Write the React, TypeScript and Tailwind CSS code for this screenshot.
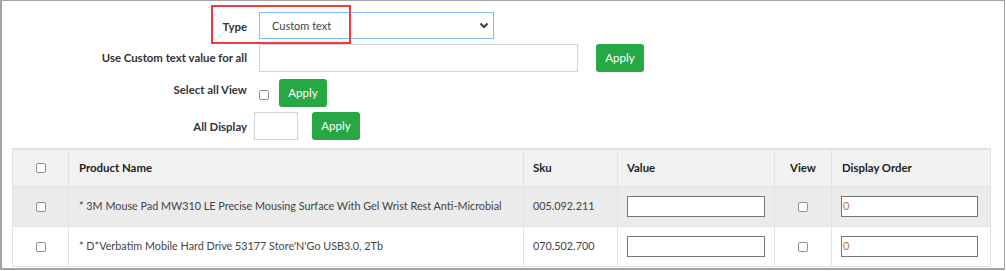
import React from "react";

const font = { fontFamily: "Lato, 'Open Sans', sans-serif" };

function Check() {
  return (
    <span className="inline-block w-[10px] h-[10px] border border-[#8f8f8f] rounded-[2px] bg-white" />
  );
}

function ApplyBtn() {
  return (
    <button className="w-[48px] h-[28px] bg-[#28a745] rounded-[3px] text-white text-[11.5px] leading-none">
      Apply
    </button>
  );
}

const rows = [
  { name: "* 3M Mouse Pad MW310 LE Precise Mousing Surface With Gel Wrist Rest Anti-Microbial", sku: "005.092.211", bg: "bg-[#ebebeb]" },
  { name: "* D*Verbatim Mobile Hard Drive 53177 Store'N'Go USB3.0, 2Tb", sku: "070.502.700", bg: "bg-white" },
];

export default function App() {
  return (
    <div style={font} className="relative w-[1005px] h-[270px] border-t border-r border-b-2 border-l-2 border-[#a3a3a3] bg-white overflow-hidden text-[#333]">
      {/* highlight */}
      <div className="absolute left-[209px] top-[4px] w-[140px] h-[39px] border-2 border-[#ee3b40] pointer-events-none" />

      <div className="flex flex-col pt-[11px]">
        {/* Type */}
        <div className="flex items-center h-[27px]">
          <div className="w-[245px] text-right font-bold text-[11.4px] pt-[2px]">Type</div>
          <div className="ml-[12px] w-[235px] h-[27px] border border-[#80bdff] flex items-center justify-between pl-[12px] pr-[4px]">
            <span className="text-[11px] text-[#444] pt-[2px]">Custom text</span>
            <svg width="10" height="7" viewBox="0 0 10 7">
              <path d="M1.5 1.5 L5 5 L8.5 1.5" fill="none" stroke="#3a3f44" strokeWidth="2" />
            </svg>
          </div>
        </div>

        {/* Use custom */}
        <div className="flex items-center h-[28px] mt-[5px]">
          <div className="w-[245px] text-right font-bold text-[11.4px]">Use Custom text value for all</div>
          <div className="ml-[12px] w-[319px] h-[28px] border border-[#cfd4da]" />
          <div className="ml-[18px]">
            <ApplyBtn />
          </div>
        </div>

        {/* Select all view */}
        <div className="flex items-center h-[28px] mt-[7px]">
          <div className="w-[245px] text-right font-bold text-[11.4px] self-start pt-[2px]">Select all View</div>
          <div className="ml-[12px] flex items-center pt-[3px]">
            <Check />
          </div>
          <div className="ml-[10px]">
            <ApplyBtn />
          </div>
        </div>

        {/* All display */}
        <div className="flex items-center h-[28px] mt-[5px]">
          <div className="w-[245px] text-right font-bold text-[11.4px] pt-[2px]">All Display</div>
          <div className="ml-[7px] w-[44px] h-[28px] border border-[#cfd4da]" />
          <div className="ml-[14px]">
            <ApplyBtn />
          </div>
        </div>
      </div>

      {/* table */}
      <div className="ml-[10px] mt-[8px] w-[979px] border-t-2 border-r border-[#e2e2e2]">
        <div className="grid grid-cols-[56px_455px_94px_157px_57px_159px] h-[37px] bg-[#f2f2f2] border-b border-[#e2e2e2] font-bold text-[11.4px] text-[#222]">
          <div className="border-l border-[#e2e2e2] flex items-center justify-center"><Check /></div>
          <div className="border-l border-[#e2e2e2] flex items-center pl-[10px]">Product Name</div>
          <div className="border-l border-[#e2e2e2] flex items-center pl-[9px]">Sku</div>
          <div className="border-l border-[#e2e2e2] flex items-center pl-[9px]">Value</div>
          <div className="border-l border-[#e2e2e2] flex items-center justify-center">View</div>
          <div className="border-l border-[#e2e2e2] flex items-center pl-[10px]">Display Order</div>
        </div>
        {rows.map((r, i) => (
          <div key={i} className={`grid grid-cols-[56px_455px_94px_157px_57px_159px] h-[40px] ${r.bg} border-b border-[#e2e2e2] text-[10.8px] text-[#444]`}>
            <div className="border-l border-[#e2e2e2] flex items-center justify-center"><Check /></div>
            <div className="border-l border-[#e2e2e2] flex items-center pl-[10px]">{r.name}</div>
            <div className="border-l border-[#e2e2e2] flex items-center pl-[9px]">{r.sku}</div>
            <div className="border-l border-[#e2e2e2] flex items-center pl-[9px]">
              <div className="w-[138px] h-[21px] border border-[#767676] bg-white" />
            </div>
            <div className="border-l border-[#e2e2e2] flex items-center justify-center"><Check /></div>
            <div className="border-l border-[#e2e2e2] flex items-center pl-[9px]">
              <div className="w-[137px] h-[21px] border border-[#767676] bg-white flex items-center pl-[1px] text-[11px] text-[#c07a1a]">0</div>
            </div>
          </div>
        ))}
      </div>
    </div>
  );
}
